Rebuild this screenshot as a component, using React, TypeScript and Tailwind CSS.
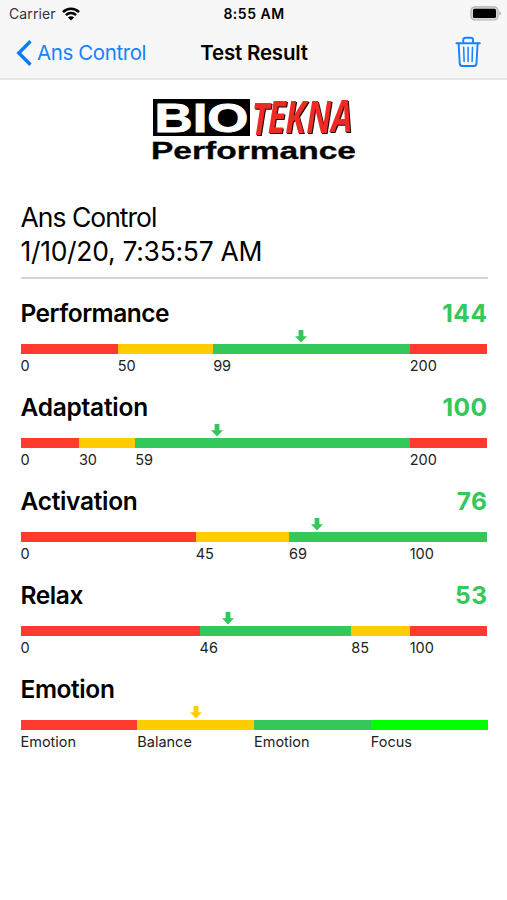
import React from 'react';

interface Segment {
  label: string;
  from: number;
  to: number;
  color: string;
}

interface Metric {
  name: string;
  value?: number;
  max: number;
  marker: number;
  markerColor: string;
  tracking: string;
  segments: Segment[];
}

const RED = 'bg-[#ff3b30]';
const YELLOW = 'bg-[#ffcc00]';
const GREEN = 'bg-[#34c759]';
const LIME = 'bg-[#00ff00]';

const metrics: Metric[] = [
  {
    name: 'Performance', value: 144, max: 240, marker: 144.3, markerColor: 'text-[#34c759]', tracking: 'tracking-[-0.5px]',
    segments: [
      { label: '0', from: 0, to: 50, color: RED },
      { label: '50', from: 50, to: 99, color: YELLOW },
      { label: '99', from: 99, to: 200, color: GREEN },
      { label: '200', from: 200, to: 240, color: RED },
    ],
  },
  {
    name: 'Adaptation', value: 100, max: 240, marker: 100.8, markerColor: 'text-[#34c759]', tracking: 'tracking-[-0.25px]',
    segments: [
      { label: '0', from: 0, to: 30, color: RED },
      { label: '30', from: 30, to: 59, color: YELLOW },
      { label: '59', from: 59, to: 200, color: GREEN },
      { label: '200', from: 200, to: 240, color: RED },
    ],
  },
  {
    name: 'Activation', value: 76, max: 120, marker: 76.1, markerColor: 'text-[#34c759]', tracking: 'tracking-[-0.3px]',
    segments: [
      { label: '0', from: 0, to: 45, color: RED },
      { label: '45', from: 45, to: 69, color: YELLOW },
      { label: '69', from: 69, to: 100, color: GREEN },
      { label: '100', from: 100, to: 120, color: GREEN },
    ],
  },
  {
    name: 'Relax', value: 53, max: 120, marker: 53.3, markerColor: 'text-[#34c759]', tracking: 'tracking-[-0.4px]',
    segments: [
      { label: '0', from: 0, to: 46, color: RED },
      { label: '46', from: 46, to: 85, color: GREEN },
      { label: '85', from: 85, to: 100, color: YELLOW },
      { label: '100', from: 100, to: 120, color: RED },
    ],
  },
  {
    name: 'Emotion', max: 4, marker: 1.5, markerColor: 'text-[#ffcc00]', tracking: 'tracking-[-0.4px]',
    segments: [
      { label: 'Emotion', from: 0, to: 1, color: RED },
      { label: 'Balance', from: 1, to: 2, color: YELLOW },
      { label: 'Emotion', from: 2, to: 3, color: GREEN },
      { label: 'Focus', from: 3, to: 4, color: LIME },
    ],
  },
];

const WifiIcon = () => (
  <svg viewBox="0 0 18 14" className="h-3.5 w-[18px]" fill="none" stroke="#000" strokeWidth="2.5">
    <path d="M1 5.1A11.3 11.3 0 0 1 17 5.1" />
    <path d="M3.9 8.2A7.2 7.2 0 0 1 14.1 8.2" />
    <path d="M9 13.6 5.9 10.5A4.4 4.4 0 0 1 12.1 10.5Z" fill="#000" stroke="none" />
  </svg>
);

const BatteryIcon = () => (
  <svg viewBox="0 0 32 15" className="h-[15px] w-8" fill="none">
    <rect x="1" y="0.8" width="27" height="13.2" rx="3.8" fill="#d6d6d6" stroke="#b3b3b3" strokeWidth="1.2" />
    <rect x="3" y="2.8" width="23" height="9.2" rx="1.6" fill="#000" />
    <path d="M29.3 5.2c1.2.4 1.7 1.2 1.7 2.2s-.5 1.8-1.7 2.2z" fill="#b3b3b3" />
  </svg>
);

const TrashIcon = () => (
  <svg viewBox="0 0 26 32" className="h-8 w-[26px]" fill="none" stroke="#1583ff" strokeWidth="1.9" strokeLinecap="round" strokeLinejoin="round">
    <path d="M1.4 7.2h23.4" />
    <path d="M8.2 7V4Q8.2 1.8 10.4 1.8h5.4Q18 1.8 18 4V7" />
    <path d="M3.6 7.4 4.7 27.4Q4.9 30 7.2 30h11.8Q21.3 30 21.5 27.4L22.6 7.4" />
    <path d="M8.7 11.2 9.1 25.4M13.1 11.2V25.4M17.5 11.2 17.1 25.4" strokeWidth="1.5" />
  </svg>
);

const Logo = () => (
  <svg viewBox="150 94 210 70" className="h-[70px] w-[210px] overflow-visible">
    <rect x="153" y="99" width="97" height="37" fill="#000" />
    <text x="154.5" y="131.5" fontSize="40" fontWeight="700" fontFamily="Liberation Sans, Arial, sans-serif" fill="#fff" stroke="#fff" strokeWidth="0.9" textLength="94" lengthAdjust="spacingAndGlyphs">BIO</text>
    <g className="drop-shadow-[1.3px_1.1px_0_#1a0505]">
      <text
        transform="translate(251.5 133.5) scale(0.76 1)"
        x="0 21.5 44.5 72 105"
        y="1 -0.5 -0.5 -1 -1.5"
        fontSize="44"
        fontWeight="700"
        fontStyle="italic"
        fontFamily="Open Sans, sans-serif"
        fill="#ee2a24"
      >
        TEKNA
      </text>
    </g>
    <text x="151" y="159" fontSize="24" fontWeight="700" fontFamily="Liberation Sans, Arial, sans-serif" fill="#000" stroke="#000" strokeWidth="0.3" textLength="205" lengthAdjust="spacingAndGlyphs">Performance</text>
  </svg>
);

const MetricRow: React.FC<{ metric: Metric }> = ({ metric }) => (
  <section className="h-[94px]">
    <div className="flex h-[33px] items-center justify-between pt-0.5 font-semibold leading-none">
      <h2 className={`text-[24.5px] ${metric.tracking}`}>{metric.name}</h2>
      {metric.value !== undefined && <span className="text-[24.5px] font-[650] tracking-[0.5px] text-[#34c759]">{metric.value}</span>}
    </div>
    <div className="relative h-[15px]">
      <svg
        viewBox="0 0 12 13"
        className={`absolute top-px h-[13px] w-3 -translate-x-1/2 ${metric.markerColor}`}
        style={{ left: `${(metric.marker / metric.max) * 100}%` }}
      >
        <path d="M3.6 0h4.8v6.2H12L6 12.6 0 6.2h3.6z" fill="currentColor" />
      </svg>
    </div>
    <div className="flex">
      {metric.segments.map((s, i) => (
        <div key={i} style={{ width: `${((s.to - s.from) / metric.max) * 100}%` }}>
          <div className={`h-2.5 ${s.color}`} />
          <div className="pt-[3px] text-[14.5px] leading-[18px] text-[#222]">{s.label}</div>
        </div>
      ))}
    </div>
  </section>
);

export default function App() {
  return (
    <div className="flex h-[900px] w-[507px] flex-col overflow-hidden bg-white font-['Inter',sans-serif] text-black">
      <header className="h-20 border-b-2 border-[#e6e6e6] bg-[#f7f7f7]">
        <div className="grid h-[27px] grid-cols-3 items-center pl-[9px] pr-[5px] text-[14px] leading-none">
          <div className="flex items-center gap-1.5 text-[#333]">
            <span className="tracking-[0.1px]">Carrier</span>
            <WifiIcon />
          </div>
          <div className="pr-[3px] text-center font-semibold tracking-[0.5px]">8:55 AM</div>
          <div className="flex justify-end"><BatteryIcon /></div>
        </div>
        <div className="grid h-[52px] grid-cols-3 items-center pl-4 pr-[26px] text-[20.5px] leading-none">
          <button className="flex items-center gap-[5px] whitespace-nowrap text-[#1583ff]">
            <svg viewBox="0 0 16 26" className="h-[26px] w-4" fill="none" stroke="#0a7aff" strokeWidth="3.4">
              <path d="M14.5 1.3 2.8 13l11.7 11.7" />
            </svg>
            <span className="pt-px tracking-[-0.4px]">Ans Control</span>
          </button>
          <h1 className="pl-[11px] pt-px text-center font-semibold tracking-[-0.2px]">Test Result</h1>
          <div className="-mt-0.5 flex justify-end"><TrashIcon /></div>
        </div>
      </header>
      <main className="flex flex-col pl-[20.5px] pr-[19.5px]">
        <div className="flex h-[120px] justify-center pl-0.5 pt-3.5">
          <Logo />
        </div>
        <div className="h-[79px] border-b-2 border-[#d4d4d4] text-[26.5px] leading-[34px]">
          <p className="tracking-[-1px]">Ans Control</p>
          <p className="tracking-[-0.3px]">1/10/20, 7:35:57 AM</p>
        </div>
        <div className="pt-[17px]">
          {metrics.map(m => <MetricRow key={m.name} metric={m} />)}
        </div>
      </main>
    </div>
  );
}
